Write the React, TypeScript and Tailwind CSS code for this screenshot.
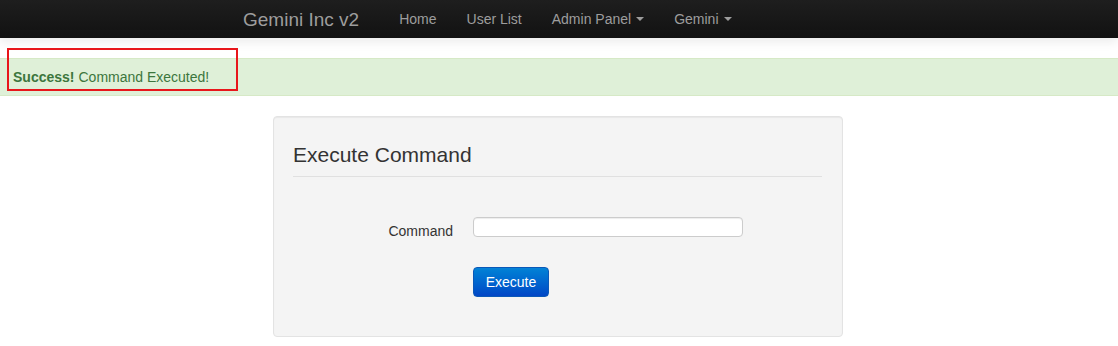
import { useState } from "react";

const navLinks = [
  { label: "Home", caret: false },
  { label: "User List", caret: false },
  { label: "Admin Panel", caret: true },
  { label: "Gemini", caret: true },
];

function Caret() {
  return (
    <span className="ml-[5px] inline-block h-0 w-0 border-x-4 border-t-4 border-x-transparent border-t-[#9d9d9d] align-middle" />
  );
}

export default function App() {
  const [command, setCommand] = useState("");

  return (
    <div className="relative min-h-[346px] bg-white font-['Liberation_Sans',Arial,sans-serif] text-[14px] text-[#333]">
      {/* top navbar */}
      <nav className="flex h-[38px] items-center bg-gradient-to-b from-[#1e1e1e] to-[#121212] pl-[243px] shadow-[0_4px_10px_rgba(0,0,0,0.08)]">
        <a className="mr-[25px] text-[19px] leading-none text-[#9d9d9d]">Gemini Inc v2</a>
        <ul className="flex">
          {navLinks.map((link) => (
            <li key={link.label}>
              <a className="flex items-center px-[15px] leading-[36px] text-[#9d9d9d]">
                {link.label}
                {link.caret && <Caret />}
              </a>
            </li>
          ))}
        </ul>
      </nav>

      {/* success alert */}
      <div className="mt-[20px] flex h-[38px] items-center border-y border-[#d6e9c6] bg-[#dff0d8] pl-[13px] text-[#3c763d]">
        <strong className="font-bold">Success!</strong>
        <span className="ml-[4px]">Command Executed!</span>
      </div>

      {/* highlight box drawn over the alert */}
      <div className="pointer-events-none absolute left-[7px] top-[48px] h-[43px] w-[231px] border-2 border-[#e8161b]" />

      {/* command panel */}
      <div className="ml-[273px] mt-[20px] h-[221px] w-[570px] rounded-[4px] border border-[#e3e3e3] bg-[#f4f4f4] px-[19px] pt-[26px] shadow-[inset_0_1px_1px_rgba(0,0,0,0.05)]">
        <h2 className="text-[21px] leading-[24px] text-[#333]">Execute Command</h2>
        <hr className="mt-[9px] mr-[1px] border-t border-[#e0e0e0]" />

        <div className="mt-[40px] flex items-start">
          <label className="w-[180px] pr-[20px] pt-[4px] text-right text-[14px] leading-[20px] text-[#333]">
            Command
          </label>
          <input
            value={command}
            onChange={(e) => setCommand(e.target.value)}
            className="h-[20px] w-[270px] rounded-[4px] border border-[#ccc] bg-white px-[6px] text-[13px] shadow-[inset_0_1px_1px_rgba(0,0,0,0.075)] outline-none"
          />
        </div>

        <div className="mt-[26px] pl-[180px]">
          <button className="h-[30px] w-[76px] rounded-[4px] border border-[#0a58b8] bg-gradient-to-b from-[#0582d6] to-[#0346c6] text-[14px] text-white">
            Execute
          </button>
        </div>
      </div>
    </div>
  );
}
